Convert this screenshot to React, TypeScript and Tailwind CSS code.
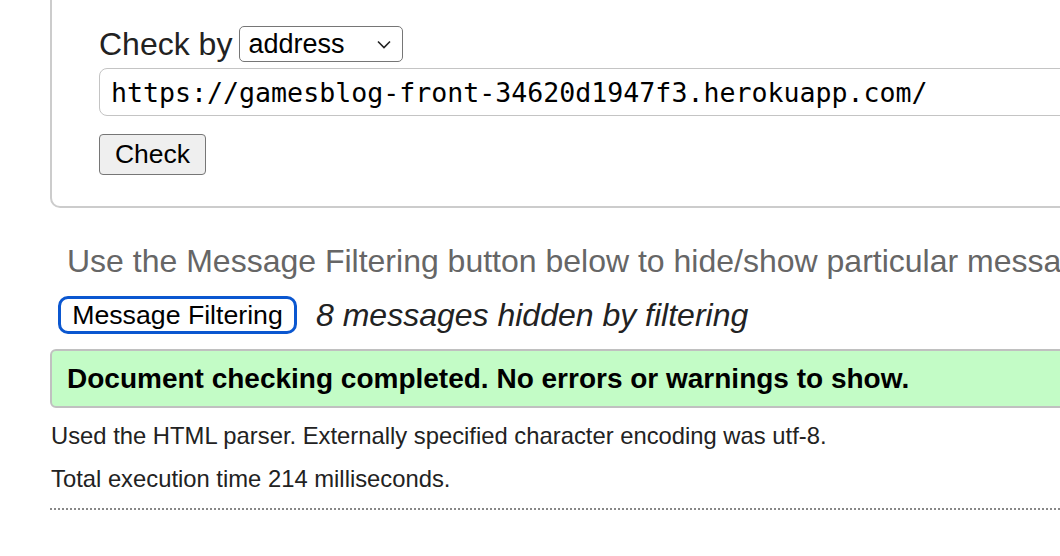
import React from 'react';

const sans = "font-['Liberation_Sans',Arial,sans-serif]";

export default function App() {
  return (
    <div className={`${sans} bg-white w-[1060px] h-[556px] overflow-hidden text-[#222]`}>
      <div className="pl-[50px]">
        {/* Form fieldset (top and right edge off screen) */}
        <div className="-mt-[20px] w-[1100px] h-[228px] border-2 border-[#cccccc] rounded-[10px] pl-[47px] pt-[44px]">
          <div className="flex items-center h-[36px]">
            <span className="text-[32px] leading-none text-[#222]">Check by</span>
            <div className="relative ml-[7px]">
              <select
                defaultValue="address"
                className="appearance-none w-[164px] h-[36px] border-[1.5px] border-[#767676] rounded-[5px] bg-white pl-[8px] text-[27px] leading-none text-black outline-none"
              >
                <option value="address">address</option>
                <option value="upload">file upload</option>
                <option value="input">text input</option>
              </select>
              <svg
                className="absolute right-[12px] top-[14px] pointer-events-none"
                width="14"
                height="9"
                viewBox="0 0 14 9"
                fill="none"
              >
                <path d="M1 1.5 L7 7.5 L13 1.5" stroke="#222" strokeWidth="1.6" />
              </svg>
            </div>
          </div>
          <input
            readOnly
            value="https://gamesblog-front-34620d1947f3.herokuapp.com/"
            className="mt-[6px] block w-[1000px] h-[48px] border-[1.5px] border-[#c4c4c4] rounded-[8px] pl-[11px] font-['DejaVu_Sans_Mono',monospace] text-[26.6px] text-black outline-none"
          />
          <button className="mt-[18px] w-[107px] h-[41px] bg-[#efefef] border-[1.5px] border-[#767676] rounded-[4px] text-[26.5px] text-black leading-none">
            Check
          </button>
        </div>

        {/* Filtering */}
        <p className="mt-[35px] pl-[17px] text-[32px] leading-[36px] text-[#666] whitespace-nowrap">
          Use the Message Filtering button below to hide/show particular messages
        </p>
        <div className="flex items-center mt-[17px] ml-[8px] h-[38px]">
          <button className="w-[239px] h-[38px] border-[3px] border-[#0b57d0] rounded-[10px] bg-white text-[26.7px] text-black leading-none">
            Message Filtering
          </button>
          <span className="ml-[19px] text-[32px] italic text-[#222] leading-none">8 messages hidden by filtering</span>
        </div>

        {/* Result */}
        <div className="mt-[15px] w-[1100px] h-[59px] bg-[#c3fcc6] border-2 border-[#c0c0c0] rounded-[6px] pl-[15px] flex items-center">
          <span className="text-[28px] font-bold text-black leading-none">
            Document checking completed. No errors or warnings to show.
          </span>
        </div>

        <p className="mt-[14px] ml-[1px] text-[23.8px] leading-[28px] text-[#222]">
          Used the HTML parser. Externally specified character encoding was utf-8.
        </p>
        <p className="mt-[15px] ml-[1px] text-[23.8px] leading-[28px] text-[#222]">Total execution time 214 milliseconds.</p>
        <div className="mt-[15px] border-t-2 border-dotted border-[#888]" />
      </div>
    </div>
  );
}
